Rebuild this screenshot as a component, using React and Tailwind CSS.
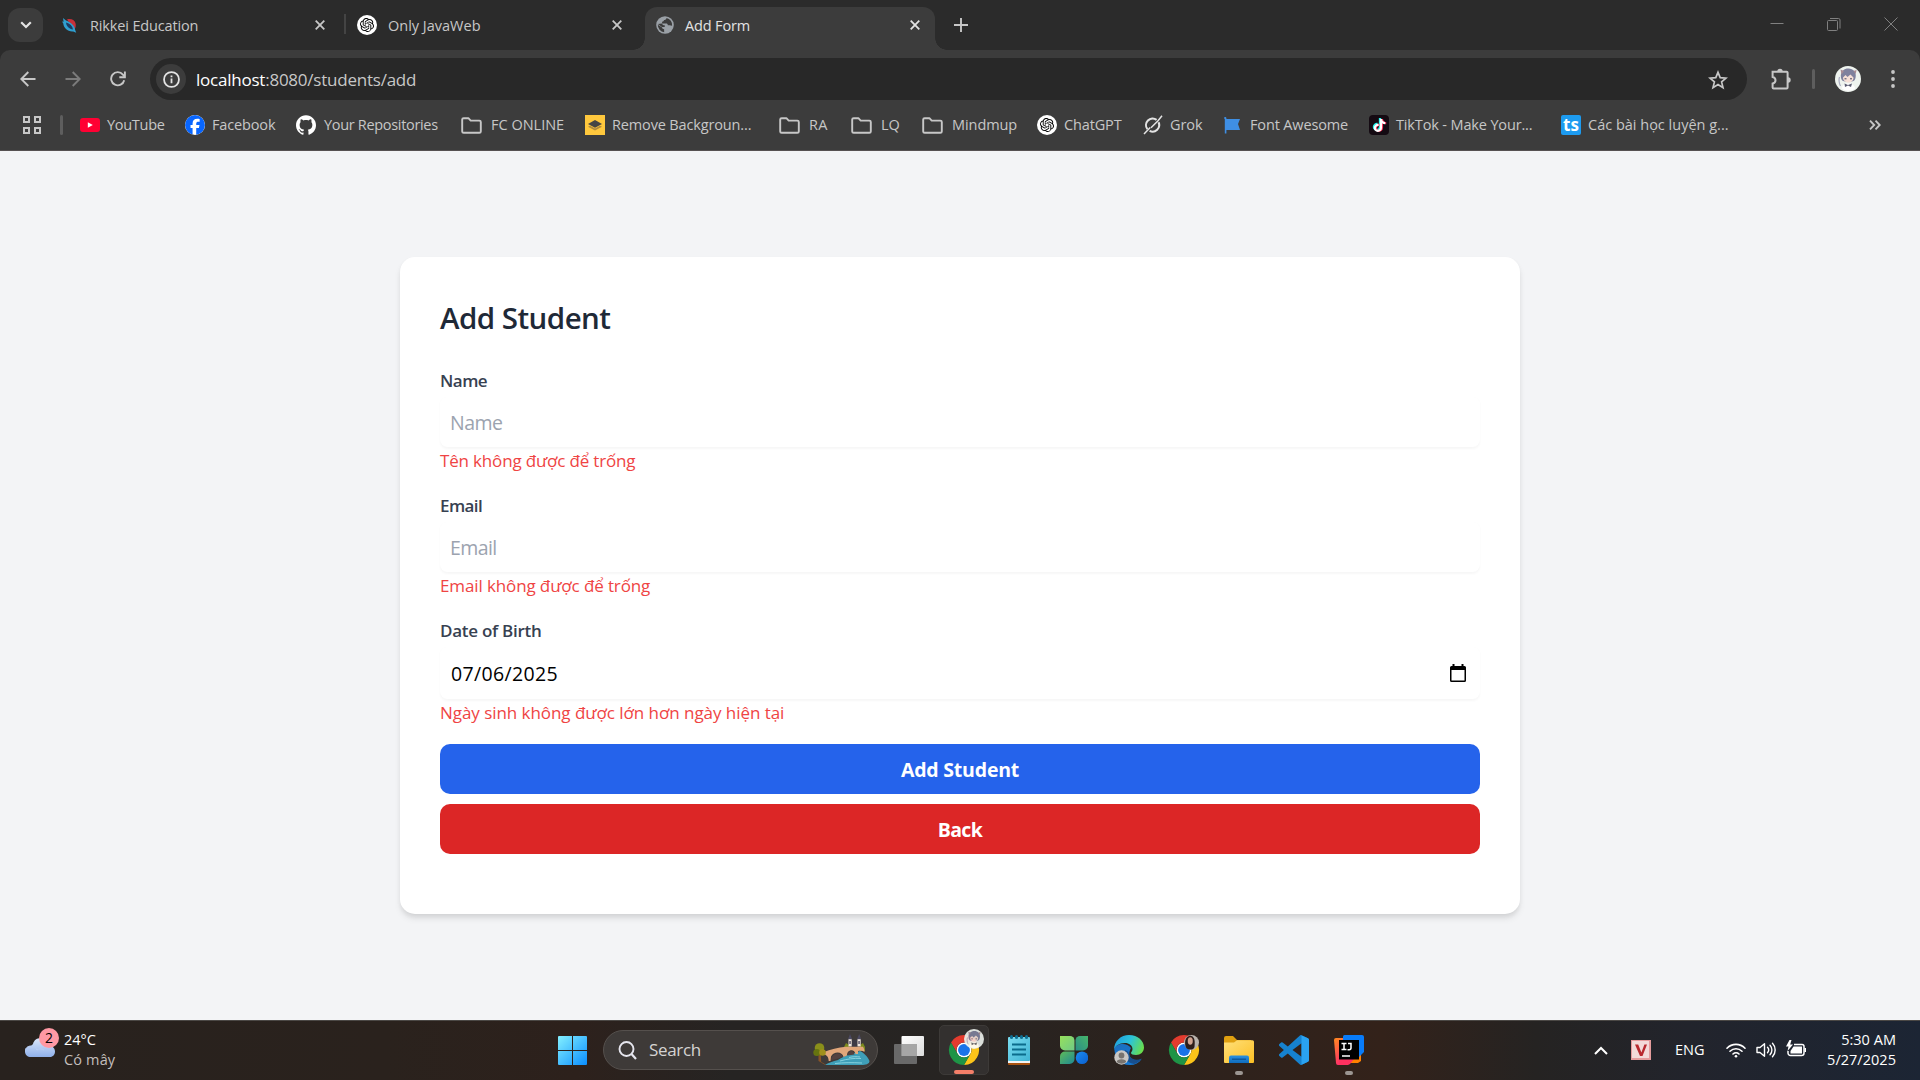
import React from "react";
import { FaFacebook, FaTiktok } from "react-icons/fa6";
import { SiOpenai, SiGithub } from "react-icons/si";

/* ---------- Browser icons ---------- */

const CloseX = ({ className = "" }) => (
  <svg viewBox="0 0 10 10" className={`size-[10px] shrink-0 ${className}`} fill="none" stroke="currentColor" strokeWidth="1.8">
    <path d="M.7.7l8.6 8.6M9.3.7L.7 9.3" />
  </svg>
);

const RikkeiIcon = () => (
  <svg viewBox="0 0 15 15" className="size-[15px] shrink-0">
    <path d="M5 1.500C9 .3 13 2 13.700 6c.4 3-.8 5.500-2.400 7L9.500 8z" fill="#c9303a" />
    <path d="M1 0l3 2.500C9 4 13 8.500 13.200 12l1 2.800-3-1.400C6 14 1.500 10 1.300 5.500L0 3.500l1.600.2z" fill="#2f9fd0" />
    <path d="M4 4.500c4 1 6.500 3.500 7 7-4-.5-6.500-3-7-7z" fill="#1b3b63" />
  </svg>
);

const OpenAiBadge = () => (
  <span className="flex size-5 shrink-0 items-center justify-center rounded-full bg-white text-black">
    <SiOpenai className="size-[14px]" />
  </span>
);

const GlobeIcon = () => (
  <svg viewBox="0 0 18 18" className="size-[18px] shrink-0">
    <circle cx="9" cy="9" r="8.800" fill="#9aa0a6" />
    <path d="M10.500 1.900c-.2 1.500-1.100 2-2.500 2.200-.2 1.200-.7 1.700-1.900 1.700v1.700h4c1.200 0 1.700.6 1.700 1.800h2c.6 0 1.200.3 2.300.5a7.300 7.300 0 0 0-5.600-7.900z" fill="#3c3c3c" />
    <path d="M1.800 8.800l4.300 2.800c.2 1.200.8 1.700 2 1.700l.1 2.900A7.300 7.300 0 0 1 1.800 8.800zM1.900 8.100L6 11h2.700V9.200c-1.500 0-2.400-.5-2.600-1.800z" fill="#3c3c3c" />
  </svg>
);

const FolderIcon = () => (
  <svg viewBox="0 0 21 17" className="h-[17px] w-[21px] shrink-0" fill="none" stroke="#c7c7c7" strokeWidth="1.9" strokeLinejoin="round">
    <path d="M1.200 2.600c0-.8.6-1.400 1.400-1.400h4.800l2.300 2.400h8.700c.8 0 1.400.6 1.400 1.400v9.400c0 .8-.6 1.400-1.400 1.400H2.600c-.8 0-1.400-.6-1.400-1.400z" />
  </svg>
);

const YouTubeIcon = () => (
  <svg viewBox="0 0 20 14" className="h-[14px] w-5 shrink-0">
    <rect width="20" height="14" rx="3" fill="#ff0033" />
    <path d="M7.800 4.200v5.600l5-2.800z" fill="#fff" />
  </svg>
);

const RemoveBgIcon = () => (
  <svg viewBox="0 0 20 20" className="size-5 shrink-0">
    <rect width="20" height="20" fill="#ffc83d" />
    <path d="M3 11.800L10 15.500l7-3.700-2-1.100-5 2.700-5-2.700z" fill="#b08a3e" />
    <path d="M10 5l7 3.900-7 3.900-7-3.900z" fill="#454545" />
  </svg>
);

const GrokIcon = () => (
  <svg viewBox="0 0 20 20" className="size-5 shrink-0" fill="none" stroke="#e3e3e3" strokeWidth="2.100">
    <path d="M15.600 7.300a6.600 6.600 0 0 1-9 8.600M4.400 14.200A6.600 6.600 0 0 1 13.600 4.900" />
    <path d="M19 .8L14.800 6 8 12.800M7.200 12.600L1 19" strokeWidth="1.500" />
  </svg>
);

const FontAwesomeIcon = () => (
  <svg viewBox="0 0 17 17" className="h-[17px] w-[17px] shrink-0">
    <path d="M0 1.200A1.200 1.200 0 0 1 2.400 1.200V2H16l-2 5 2 6H2.400v3.500H.8V2z" fill="#3f8fe4" />
  </svg>
);

const TikTokIcon = () => (
  <span className="relative flex size-5 shrink-0 items-center justify-center rounded-[4px] bg-[#140a12]">
    <FaTiktok className="absolute left-[3px] top-[3px] size-[13px] text-[#25f4ee]" />
    <FaTiktok className="absolute left-[5px] top-[4px] size-[13px] text-[#fe2c55]" />
    <FaTiktok className="absolute left-[4px] top-[3.500px] size-[13px] text-white" />
  </span>
);

const TsIcon = () => (
  <span className="flex size-5 shrink-0 items-center justify-center rounded-[2px] bg-[#1d9bf0] text-[17px] font-bold leading-none text-white">
    <span className="-mt-[2px]">ts</span>
  </span>
);

const Avatar = ({ className = "" }) => (
  <svg viewBox="0 0 26 26" className={className}>
    <circle cx="13" cy="13" r="13" fill="#eef3ee" />
    <path d="M6 12C5 5 9 2.500 13.500 2.500S22 6 20.500 12c-.5 2.500-2 3.500-4 3.500h-6C8 15.500 6.500 14.500 6 12z" fill="#7f819d" />
    <path d="M5.500 3.500l3.500 1.500-2.500 3.500z" fill="#a98b93" />
    <path d="M21.500 4l-3 1 2.200 3z" fill="#a98b93" />
    <path d="M8 11.500l2.500-2.500 2 2 3-2.500 3 3c0 3.500-2.500 5-5 5S8 15 8 11.500z" fill="#f6dfd6" />
    <path d="M9.500 12.800h2M15 12.800h2" stroke="#4b4a63" strokeWidth="1" />
    <path d="M7 22.500c0-3.500 3-5 6-5s7 1.500 7 5c-4 3-9 3-13 0z" fill="#fff" />
    <path d="M9.500 17.500l3.500 1.500 4-1.500-1 3.500-3-1.500-3 1.500z" fill="#5c5d72" />
    <path d="M4.500 11c-1 3-.5 6 1 9" stroke="#a9abc0" strokeWidth="1.200" fill="none" />
  </svg>
);

/* ---------- Browser chrome ---------- */

const TabStrip = () => (
  <div className="flex h-[50px] bg-[#2b2b2b] pl-2 text-[14.500px] tracking-[-0.010em] text-[#c7c7c7]">
    <div className="mt-2 flex h-[34px] w-[35px] shrink-0 items-center justify-center rounded-[12px] bg-[#3c3c3c]">
      <svg viewBox="0 0 12 8" className="h-[8px] w-[12px]" fill="none" stroke="#e3e3e3" strokeWidth="2.200">
        <path d="M1.200 1.200L6 6l4.800-4.800" />
      </svg>
    </div>
    <div className="flex h-[50px] w-[301px] items-center pl-[19px] pr-[19px]">
      <RikkeiIcon />
      <span className="ml-[13px] whitespace-nowrap pt-[2px] tracking-[-0.010em]">Rikkei Education</span>
      <CloseX className="ml-auto" />
    </div>
    <div className="mt-[14px] h-5 w-[2px] bg-[#444]" />
    <div className="flex h-[50px] w-[299px] items-center pl-[11px] pr-[23px]">
      <OpenAiBadge />
      <span className="ml-[11px] whitespace-nowrap pt-[2px] tracking-normal">Only JavaWeb</span>
      <CloseX className="ml-auto" />
    </div>
    <div className="relative mt-[7px] flex h-[43px] w-[290px] items-center rounded-t-[12px] bg-[#3c3c3c] pb-[7px] pl-[11px] pr-[15px] text-[#e3e3e3]">
      <span className="absolute -left-[12px] bottom-0 size-[12px] bg-[radial-gradient(circle_at_0_0,transparent_11.500px,#3c3c3c_12px)]" />
      <span className="absolute -right-[12px] bottom-0 size-[12px] bg-[radial-gradient(circle_at_100%_0,transparent_11.500px,#3c3c3c_12px)]" />
      <GlobeIcon />
      <span className="ml-[11px] whitespace-nowrap pt-[2px]">Add Form</span>
      <CloseX className="ml-auto" />
    </div>
    <svg viewBox="0 0 14 14" className="ml-[19px] mt-[18px] size-[14px]" stroke="#c7c7c7" strokeWidth="1.900">
      <path d="M7 0v14M0 7h14" />
    </svg>
    <div className="ml-auto mr-[22px] mt-[17px] flex gap-[43px] text-[#808080]">
      <svg viewBox="0 0 14 14" className="size-[14px]" stroke="currentColor"><path d="M.5 6.500h13" /></svg>
      <svg viewBox="0 0 14 14" className="size-[14px]" stroke="currentColor" fill="none">
        <rect x=".5" y="3.500" width="10" height="10" rx="1" />
        <path d="M3 1.500h8.500a1.500 1.500 0 0 1 1.500 1.500V11.500" />
      </svg>
      <svg viewBox="0 0 14 14" className="size-[14px]" stroke="currentColor"><path d="M.5 1.500l13 13M13.500 1.500L.5 14.500" transform="translate(0 -1)" /></svg>
    </div>
  </div>
);

const Toolbar = () => (
  <div className="flex h-[57px] items-center pt-[1px]">
    <div className="flex w-[150px] shrink-0 items-center pl-[19.500px]">
      <svg viewBox="0 0 16 16" className="size-4" fill="none" stroke="#c7c7c7" strokeWidth="1.900"><path d="M8.300 1L1.300 8l7 7M1.500 8H15.500" /></svg>
      <svg viewBox="0 0 16 16" className="ml-[29px] size-4" fill="none" stroke="#7b7b7b" strokeWidth="1.900"><path d="M7.700 1l7 7-7 7M14.500 8H.5" /></svg>
      <svg viewBox="0 0 16 16" className="ml-[29px] size-4" fill="none" stroke="#c7c7c7" strokeWidth="1.900">
        <path d="M14.200 9.200A6.600 6.600 0 1 1 12.900 3.600L14.500 5.500" />
        <path d="M14.900 .6v5.600H9.300" />
      </svg>
    </div>
    <div className="flex h-[42px] w-[1597px] shrink-0 items-center rounded-full bg-[#282828] pl-[6px]">
      <span className="flex size-[30px] items-center justify-center rounded-full bg-[#3c3c3c]">
        <svg viewBox="0 0 18 18" className="size-[17px]" fill="none" stroke="#e3e3e3" strokeWidth="1.900">
          <circle cx="9" cy="9" r="7.900" />
          <path d="M9 8v5M9 4.800v1.900" />
        </svg>
      </span>
      <span className="ml-[10px] whitespace-nowrap pt-[2px] text-[17px] tracking-[-0.230px] text-[#c7c7c7]">
        <span className="text-white">localhost</span>:8080/students/add
      </span>
      <svg viewBox="0 0 20 20" className="ml-auto mr-[19px] mt-[1px] size-[20px]" fill="none" stroke="#c7c7c7" strokeWidth="1.700">
        <path d="M10 2.300l2.200 5.300 5.800.5-4.400 3.800 1.400 5.700-5-3.100-5 3.100 1.400-5.700L2 8.100l5.800-.5z" />
      </svg>
    </div>
    <svg viewBox="0 0 22 22" className="ml-[23px] size-[22px]">
      <path d="M2.600 3.700h14a1 1 0 0 1 1 1v14.700a1 1 0 0 1-1 1h-13a1 1 0 0 1-1-1V15.500c1.700-.3 2.900-1.400 2.900-3.200S4.300 9.300 2.600 9z" fill="none" stroke="#c7c7c7" strokeWidth="2" />
      <path d="M7.300 3.500a2.700 2.700 0 0 1 5.400 0zM18 9.300a2.700 2.700 0 0 1 0 5.400z" fill="#c7c7c7" />
    </svg>
    <div className="ml-[20px] h-5 w-[3px] rounded bg-[#5e5e5e]" />
    <Avatar className="ml-[19.500px] size-[26px]" />
    <svg viewBox="0 0 4 18" className="ml-[30px] h-[18px] w-1" fill="#c7c7c7">
      <circle cx="2" cy="2" r="1.900" /><circle cx="2" cy="9" r="1.900" /><circle cx="2" cy="16" r="1.900" />
    </svg>
  </div>
);

const BOOKMARKS = [
  { label: "YouTube", icon: <YouTubeIcon />, box: "w-[105px] gap-[7px]", text: "tracking-[-0.020em]" },
  { label: "Facebook", icon: <FaFacebook className="size-5 shrink-0 rounded-full bg-white text-[#0866ff]" />, box: "w-[111px] gap-[7px]", text: "tracking-[-0.010em]" },
  { label: "Your Repositories", icon: <SiGithub className="size-5 shrink-0 text-white" />, box: "w-[165px] gap-[8px]", text: "tracking-[-0.022em]" },
  { label: "FC ONLINE", icon: <FolderIcon />, box: "w-[124px] gap-[9px]", text: "tracking-normal" },
  { label: "Remove Backgroun...", icon: <RemoveBgIcon />, box: "w-[194px] gap-[7px]", text: "tracking-[-0.010em]" },
  { label: "RA", icon: <FolderIcon />, box: "w-[72px] gap-[9px]", text: "tracking-[0.020em]" },
  { label: "LQ", icon: <FolderIcon />, box: "w-[71px] gap-[9px]", text: "tracking-normal" },
  { label: "Mindmup", icon: <FolderIcon />, box: "w-[115px] gap-[9px]", text: "tracking-[-0.005em]" },
  { label: "ChatGPT", icon: <OpenAiBadge />, box: "w-[106px] gap-[7px]", text: "tracking-[-0.010em]" },
  { label: "Grok", icon: <GrokIcon />, box: "w-[81px] gap-[7px]", text: "tracking-[-0.005em]" },
  { label: "Font Awesome", icon: <FontAwesomeIcon />, box: "w-[145px] gap-[9px]", text: "tracking-[-0.010em]" },
  { label: "TikTok - Make Your...", icon: <TikTokIcon />, box: "w-[192px] gap-[7px]", text: "tracking-[-0.010em]" },
  { label: "Các bài học luyện g...", icon: <TsIcon />, box: "w-[180px] gap-[7px]", text: "tracking-normal" },
];

const BookmarksBar = () => (
  <div className="flex h-[43px] items-center pb-[7px] pl-[23px] text-[14.500px] text-[#c7c7c7]">
    <svg viewBox="0 0 18 18" className="size-[18px] shrink-0" fill="none" stroke="#c7c7c7" strokeWidth="2">
      <path d="M1 1h5v5H1zM12 1h5v5h-5zM1 12h5v5H1zM12 12h5v5h-5z" />
    </svg>
    <div className="ml-[19px] h-5 w-[3px] shrink-0 rounded bg-[#5e5e5e]" />
    <div className="ml-[17px] flex">
      {BOOKMARKS.map((b) => (
        <div key={b.label} className={`flex shrink-0 items-center ${b.box}`}>
          {b.icon}
          <span className={`whitespace-nowrap ${b.text}`}>{b.label}</span>
        </div>
      ))}
    </div>
    <svg viewBox="0 0 12 10" className="ml-auto mr-[39px] h-[10px] w-[12px]" fill="none" stroke="#c7c7c7" strokeWidth="1.900">
      <path d="M1 .7L5.200 5 1 9.300M6.500 .7L10.700 5l-4.200 4.300" />
    </svg>
  </div>
);

/* ---------- Page ---------- */

const Field = ({ label, error, labelClass, errorClass, children }) => (
  <div className="mb-5">
    <div className={`mb-[5px] h-[25px] text-[17px] font-semibold leading-[27px] text-[#374151] ${labelClass}`}>{label}</div>
    {children}
    <div className={`h-[25px] text-[17px] leading-[27px] text-[#ef4444] ${errorClass}`}>{error}</div>
  </div>
);

const inputBox = "flex items-center rounded-[7.500px] bg-white px-[10px] pt-[2px] text-[19.500px] shadow-[0_1.250px_2.500px_0_rgba(0,0,0,0.035)]";

const StudentForm = () => (
  <main className="flex h-[869px] items-center justify-center bg-[#f3f4f6]">
    <div className="h-[657px] w-[1120px] rounded-[15px] bg-white p-10 shadow-[0_5px_7.500px_-1.250px_rgba(0,0,0,0.1),0_2.500px_5px_-1.250px_rgba(0,0,0,0.06)]">
      <h2 className="mb-[30px] h-10 text-[29.500px] font-semibold leading-[41px] tracking-[-0.018em] text-[#1f2937]">Add Student</h2>
      <Field label="Name" labelClass="tracking-[-0.030em]" error="Tên không được để trống" errorClass="tracking-[-0.010em]">
        <div className={`${inputBox} h-[50px] tracking-[-0.025em] text-[#9ca3af]`}>Name</div>
      </Field>
      <Field label="Email" labelClass="tracking-[-0.035em]" error="Email không được để trống" errorClass="tracking-[-0.007em]">
        <div className={`${inputBox} h-[50px] tracking-[-0.030em] text-[#9ca3af]`}>Email</div>
      </Field>
      <Field label="Date of Birth" labelClass="tracking-[-0.016em]" error="Ngày sinh không được lớn hơn ngày hiện tại" errorClass="tracking-[-0.003em]">
        <div className={`${inputBox} h-[52px] justify-between tracking-[0.018em] text-black`}>
          <span className="pl-[1px]">07/06/2025</span>
          <svg viewBox="0 0 16 18" className="mb-[3px] mr-1 h-[18px] w-4">
            <path d="M2.500 0h2v2h7V0h2v2H14.500A1.500 1.500 0 0 1 16 3.500v13a1.500 1.500 0 0 1-1.500 1.500h-13A1.500 1.500 0 0 1 0 16.500v-13A1.500 1.500 0 0 1 1.500 2h1zM1.500 6v10.500h13V6z" fill="#000" fillRule="evenodd" />
          </svg>
        </div>
      </Field>
      <button className="flex h-[50px] w-full items-center justify-center rounded-[10px] bg-[#2563eb] pt-[2px] text-[19.500px] font-bold tracking-[-0.010em] text-white">Add Student</button>
      <button className="mt-[10px] flex h-[50px] w-full items-center justify-center rounded-[10px] bg-[#dc2626] pt-[2px] text-[19.500px] font-bold tracking-[-0.035em] text-white">Back</button>
    </div>
  </main>
);

/* ---------- Taskbar ---------- */

const Chrome = ({ children }) => (
  <svg viewBox="0 0 48 48" className="size-[30px] overflow-visible">
    <circle cx="24" cy="24" r="12" fill="#fff" />
    <path d="M24,12H44.7812a23.9939,23.9939,0,0,0-41.5639.0029L13.6079,30l.0093-.0024A11.9852,11.9852,0,0,1,24,12Z" fill="#e33b2e" />
    <circle cx="24" cy="24" r="9.500" fill="#1a73e8" />
    <path d="M34.3913,30.0029,24.0007,48A23.994,23.994,0,0,0,44.78,12.0031H23.9989l-.0025.0093A11.985,11.985,0,0,1,34.3913,30.0029Z" fill="#fcc419" />
    <path d="M13.6086,30.0031,3.218,12.006A23.994,23.994,0,0,0,24.0025,48L34.3931,30.0029l-.0067-.0068a11.9852,11.9852,0,0,1-20.7778.007Z" fill="#1e9446" />
    {children}
  </svg>
);

const Cloud = () => (
  <span className="relative block h-[30px] w-[34px]">
    <svg viewBox="0 0 30 20" className="absolute left-0 top-[10px] h-[20px] w-[30px]">
      <defs>
        <linearGradient id="cloud" x1="0" y1="0" x2="0" y2="1">
          <stop offset="0" stopColor="#dbe8fb" /><stop offset="1" stopColor="#8fb0ea" />
        </linearGradient>
      </defs>
      <path d="M8 6C9 2 12 0 16 0c5 0 8 3.500 8.500 8C28 8 30 10.500 30 13.500S28 19 25 19H6c-3.500 0-6-2-6-5.500S3 8 6 8z" fill="url(#cloud)" />
      <path d="M0 13.500C0 10 3 8 6 8c3 0 5 1.500 6 4 1.500-1.500 5-1.500 7 0" fill="none" stroke="#b9cff5" />
    </svg>
    <span className="absolute left-[14px] top-0 flex size-5 items-center justify-center rounded-full bg-[#ff99a4] text-[14px] text-black">2</span>
  </span>
);

const StartLogo = () => (
  <svg viewBox="0 0 29 29" className="size-[29px]">
    <defs>
      <linearGradient id="start" gradientUnits="userSpaceOnUse" x1="0" y1="0" x2="29" y2="29">
        <stop offset="0" stopColor="#84f0ff" /><stop offset="1" stopColor="#0a8eff" />
      </linearGradient>
    </defs>
    <path d="M0 1a1 1 0 0 1 1-1h13v14H0zM15 0h13a1 1 0 0 1 1 1v13H15zM0 15h14v14H1a1 1 0 0 1-1-1zM15 15h14v13a1 1 0 0 1-1 1H15z" fill="url(#start)" />
  </svg>
);

const BridgeArt = () => (
  <svg viewBox="0 0 57 32" className="h-8 w-[57px] shrink-0">
    <path d="M12 31c3-2 8-4 13-5 4-3 9-5 13-6l9-3c4 2 8 6 9.500 10 0 3-4 4-8 4z" fill="#3f9fb8" />
    <path d="M27 27c7-2 14-3 21-2.500M22 29.500c9-1 17-1 27-.5M36 23.500c4-1 8-1 11-.5" stroke="#8fd7e2" strokeWidth=".9" fill="none" />
    <path d="M31 13l2-4 3 2v4h-5zM47 11l3-2 2 4v4h-5z" fill="#7d8b1d" />
    <path d="M39 6h5v7h-5z" fill="#3d3a45" />
    <path d="M35.500 5h3.200v7.500h-3.200zM44.500 5h3.200v7.500h-3.200z" fill="#efe6df" />
    <path d="M36.300 7h1.500v3h-1.500zM45.300 7h1.500v3h-1.500z" fill="#5c566a" />
    <path d="M35 5.200L37 0l2.200 5.200zM44 5.200L46.200 0l2 5.200z" fill="#4b4960" />
    <path d="M11 18c6-2.500 14-4.500 22-5.200h17c1 1.500 1.500 3.500 1.500 5.200-1.500-1.200-4-1.500-6.500-1v3h-2.500c-.5-3-3-4.500-5.500-3.500-2 .8-3 2.500-3 5l-3.500 1.500c-1-6-10-6-12.500-.5L17.500 27h-1.800c0-3-1.200-5.200-3.700-6.500z" fill="#e2a77a" />
    <path d="M18 26.500c.5-8 10-9 12-3.500-4 1.300-8 2.300-12 3.500zM34.500 21.500c.2-5.500 6.300-6 7-1z" fill="#54413f" />
    <path d="M5.500 19h2.200l.5 9c2 1 4 2 4.500 3.200L5.500 27z" fill="#8a5426" />
    <circle cx="6.500" cy="14" r="4.800" fill="#8a8f1a" /><circle cx="3.800" cy="18.500" r="3.500" fill="#66740f" /><circle cx="9.500" cy="18.500" r="3.300" fill="#a0901c" />
  </svg>
);

const TaskView = () => (
  <svg viewBox="0 0 30 28" className="h-7 w-[30px]">
    <defs>
      <linearGradient id="tv" x1="0" y1="0" x2="1" y2="1"><stop offset="0" stopColor="#fff" /><stop offset="1" stopColor="#dcdcdc" /></linearGradient>
    </defs>
    <rect x="7.500" y="0" width="22.500" height="20" rx="1" fill="url(#tv)" />
    <rect x="0" y="8" width="23" height="20" rx="1" fill="#757575" fillOpacity=".85" />
    <rect x="7.500" y="8" width="15.500" height="12" fill="#a6a6a6" />
  </svg>
);

const Notepad = () => (
  <svg viewBox="0 0 22 30" className="h-[30px] w-[22px]">
    <defs>
      <linearGradient id="np" x1="0" y1="0" x2="1" y2="1"><stop offset="0" stopColor="#7adcf0" /><stop offset="1" stopColor="#3fb4d4" /></linearGradient>
    </defs>
    <rect x="0" y="24" width="22" height="6" rx="1" fill="#a8520f" />
    <rect x="0" y="22" width="22" height="6" fill="#f3f3f3" />
    <rect x="0" y="2" width="22" height="24" rx="1" fill="url(#np)" />
    <path d="M4 9.500h14M4 14.500h14M4 19.500h14" stroke="#0b6c8c" strokeWidth="1.800" />
    <g fill="#0f6f93"><rect x="2" y="0" width="3" height="4" rx="1.500" /><rect x="7" y="0" width="3" height="4" rx="1.500" /><rect x="12" y="0" width="3" height="4" rx="1.500" /><rect x="17" y="0" width="3" height="4" rx="1.500" /></g>
  </svg>
);

const Clover = () => (
  <svg viewBox="0 0 28 28" className="size-7">
    <defs>
      <linearGradient id="cl1" x1="0" y1="0" x2="1" y2="1"><stop offset="0" stopColor="#97e05c" /><stop offset="1" stopColor="#6fca86" /></linearGradient>
      <linearGradient id="cl2" x1="1" y1="0" x2="0" y2="1"><stop offset="0" stopColor="#46b56a" /><stop offset="1" stopColor="#2b8f87" /></linearGradient>
      <linearGradient id="cl3" x1="0" y1="0" x2="1" y2="1"><stop offset="0" stopColor="#5fbb58" /><stop offset="1" stopColor="#1f8a94" /></linearGradient>
      <linearGradient id="cl4" x1="0" y1="0" x2="1" y2="1"><stop offset="0" stopColor="#1a8cf0" /><stop offset="1" stopColor="#0b5fd0" /></linearGradient>
    </defs>
    <path d="M0 0h10a4.500 4.500 0 0 1 4.500 4.500v10H5A5 5 0 0 1 0 9.500z" fill="url(#cl1)" />
    <path d="M28 0v9.500a5 5 0 0 1-5 5h-7.500v-10A4.500 4.500 0 0 1 20 0z" fill="url(#cl2)" />
    <path d="M0 28v-7.500a5 5 0 0 1 5-5h9.500V23a5 5 0 0 1-5 5z" fill="url(#cl3)" />
    <circle cx="22" cy="21.700" r="6.300" fill="url(#cl4)" />
  </svg>
);

const Edge = () => (
  <svg viewBox="0 0 30 30" className="size-[30px]">
    <defs>
      <linearGradient id="eg1" x1="0" y1=".3" x2="1" y2=".6"><stop offset="0" stopColor="#1f9fe0" /><stop offset=".5" stopColor="#2cc3d8" /><stop offset="1" stopColor="#6ade4a" /></linearGradient>
      <linearGradient id="eg2" x1="0" y1="0" x2="0" y2="1"><stop offset="0" stopColor="#1b6fc0" /><stop offset="1" stopColor="#1478d4" /></linearGradient>
    </defs>
    <path d="M.3 14C1 22 5 30 16 30c5 0 9-2 11.500-6-4 2-9 1.500-11-1.500C14 19 16 15 17 13 13 7 2 8 .3 14z" fill="url(#eg2)" />
    <path d="M11 15c-2 6 1 13 9 14 3-.8 6-2.500 7.700-5.500C20 27 14 22 14.500 17z" fill="#174f8f" />
    <path d="M0 15C0 6 7 0 15 0c9 0 15 6 15 12.500 0 4.500-3.500 7.500-8 7.500-3 0-5-1-5-2s1.500-1.500 1.500-4C18.500 10.500 15 8 11 8 5 8 1 11 0 15z" fill="url(#eg1)" />
    <circle cx="7.500" cy="22.500" r="7.200" fill="#c9c7c4" />
    <circle cx="7.500" cy="20.500" r="2.900" fill="#77736f" />
    <path d="M2.800 27c0-2 2-2.800 4.700-2.800s4.700.8 4.700 2.800a7 7 0 0 1-9.400 0z" fill="#77736f" />
  </svg>
);

const Explorer = () => (
  <svg viewBox="0 0 30 28" className="h-7 w-[30px]">
    <defs>
      <linearGradient id="ex" x1="0" y1="0" x2="1" y2="1"><stop offset="0" stopColor="#ffe07a" /><stop offset="1" stopColor="#fcbf24" /></linearGradient>
      <linearGradient id="ex2" x1="0" y1="0" x2="0" y2="1"><stop offset="0" stopColor="#2a90e0" /><stop offset="1" stopColor="#0f6cbd" /></linearGradient>
    </defs>
    <path d="M0 2a2 2 0 0 1 2-2h7l4 4h14v6H0z" fill="#e0a010" />
    <path d="M0 6.500h10l3-2.300h15.500A1.500 1.500 0 0 1 30 5.700V26a1 1 0 0 1-1 1H1a1 1 0 0 1-1-1z" fill="url(#ex)" />
    <path d="M5 27v-5.500a2 2 0 0 1 2-2h16a2 2 0 0 1 2 2V27z" fill="url(#ex2)" />
    <path d="M8 23.200h14" stroke="#0a4f92" strokeWidth="1.200" />
  </svg>
);

const VsCode = () => (
  <svg viewBox="0 0 24 24" className="size-[30px]">
    <path d="M23.150 2.587L18.210.210a1.494 1.494 0 0 0-1.705.290l-9.460 8.630-4.120-3.128a.999.999 0 0 0-1.276.057L.327 7.261A1 1 0 0 0 .326 8.740L3.899 12 .326 15.260a1 1 0 0 0 .001 1.479L1.650 17.940a.999.999 0 0 0 1.276.057l4.120-3.128 9.460 8.630a1.492 1.492 0 0 0 1.704.290l4.942-2.377A1.500 1.500 0 0 0 24 20.060V3.939a1.500 1.500 0 0 0-.850-1.352zm-5.146 14.861L10.826 12l7.178-5.448v10.896z" fill="#1682cf" />
    <path d="M18.004.300L23.150 2.587A1.500 1.500 0 0 1 24 3.939V20.060a1.500 1.500 0 0 1-.850 1.352L18.004 23.800z" fill="#2aa3f2" />
  </svg>
);

const IntelliJ = () => (
  <svg viewBox="0 0 30 30" className="size-[30px]">
    <defs>
      <linearGradient id="ij" x1="0" y1="0" x2=".4" y2="1"><stop offset="0" stopColor="#ff8a1f" /><stop offset="1" stopColor="#ff2d6b" /></linearGradient>
    </defs>
    <path d="M17 18h10v8l-3 2h-8z" fill="#ff8100" />
    <path d="M0 5a2 2 0 0 1 2-2h12v22l-4 5H4a2 2 0 0 1-2-2z" fill="url(#ij)" />
    <path d="M5 24h15l-4 5-2 1H5z" fill="#ff3160" />
    <path d="M9 1.500A1.500 1.500 0 0 1 10.500 0H28a2 2 0 0 1 2 2v15l-5 5H9z" fill="#087cfa" />
    <rect x="5" y="5" width="20" height="19.500" fill="#000" />
    <path d="M7.500 8.500h5M10 8.500v6M7.500 14.500h5M14 8.500h3v4.500q0 1.700-1.800 1.700h-1.700M8 21h8" stroke="#fff" strokeWidth="1.500" fill="none" />
  </svg>
);

const APPS = [
  { id: "taskview", icon: <TaskView /> },
  {
    id: "chrome-main",
    active: true,
    icon: (
      <span className="relative block size-[30px]">
        <Chrome />
        <Avatar className="absolute -top-[6px] left-[15px] size-5 opacity-90" />
      </span>
    ),
  },
  { id: "notepad", icon: <Notepad /> },
  { id: "clover", icon: <Clover /> },
  { id: "edge", icon: <Edge /> },
  {
    id: "chrome-second",
    icon: (
      <Chrome>
        <circle cx="36" cy="12" r="12" fill="#b9b3ad" />
        <path d="M28 21c-4-6-3-20 6-20 6 0 8 7 7 15 0 4-1 6-4 7-4 1-7 0-9-2z" fill="#2c1d1a" />
        <ellipse cx="34" cy="9.500" rx="4" ry="6" fill="#d0a390" />
      </Chrome>
    ),
  },
  { id: "explorer", icon: <Explorer />, running: true },
  { id: "vscode", icon: <VsCode /> },
  { id: "intellij", icon: <IntelliJ />, running: true },
];

const Taskbar = () => (
  <footer className="flex h-[60px] items-center border-t border-[#4b4845] bg-[linear-gradient(90deg,#28221e_0%,#2a221d_20%,#2d211c_30%,#262423_38%,#272422_50%,#2c221d_60%,#33221a_72%,#252322_80%,#22242c_88%,#1c2534_100%)] text-white">
    <div className="flex w-[558px] items-center pl-[25px] text-[14.500px] leading-5">
      <div className="-mt-4"><Cloud /></div>
      <div className="-mt-[2px] ml-[5px]">
        <div className="tracking-normal">24°C</div>
        <div className="tracking-[0.010em] text-[#c3bfbc]">Có mây</div>
      </div>
    </div>
    <StartLogo />
    <div className="-mt-[1px] ml-4 flex h-10 w-[275px] items-center rounded-full border border-[#55504d] bg-[#3e3a38] pl-[14px] pr-[7px] text-[17px] tracking-[-0.020em] text-[#d5d3d2]">
      <svg viewBox="0 0 19 19" className="size-[19px]" fill="none" stroke="#e6e6ee" strokeWidth="1.900">
        <circle cx="8.500" cy="8" r="7" /><path d="M13.500 13l4.500 5" strokeWidth="2.200" />
      </svg>
      <span className="ml-[12px] grow">Search</span>
      <BridgeArt />
    </div>
    <div className="-mt-[1px] ml-[6px] flex gap-[5px]">
      {APPS.map((a) => (
        <div
          key={a.id}
          className={`relative flex size-[50px] items-center justify-center rounded-[5px] ${a.active ? "border border-[#3d3a38] bg-[#33302f]" : ""}`}
        >
          {a.icon}
          {a.active && <span className="absolute bottom-0 left-[14px] h-1 w-5 rounded-full bg-[#f37f69]" />}
          {a.running && <span className="absolute bottom-0 left-[21px] h-1 w-2 rounded-full bg-[#9c9692]" />}
        </div>
      ))}
    </div>
    <div className="-mt-[1px] ml-auto flex items-center pr-6 text-[14.500px]">
      <svg viewBox="0 0 14 9" className="h-[9px] w-[14px]" fill="none" stroke="#fff" strokeWidth="2"><path d="M1 8l6-6 6 6" /></svg>
      <svg viewBox="0 0 20 20" className="ml-[23px] size-5">
        <rect width="20" height="20" fill="#e59c9c" /><rect x="1" y="1" width="17" height="17" fill="#f3dad8" />
        <path d="M4 4.500h3.200l3.200 8 3-8H16l-4.500 11.500H9z" fill="#b8292e" />
      </svg>
      <span className="ml-6 w-[51px] tracking-[-0.005em]">ENG</span>
      <svg viewBox="0 0 20 16" className="h-4 w-5" fill="none" stroke="#fff" strokeWidth="1.600" strokeLinecap="round">
        <path d="M1 6.200a12.500 12.500 0 0 1 18 0M4 9.200a8.500 8.500 0 0 1 12 0M7 12a4.400 4.400 0 0 1 6 0" />
        <circle cx="10" cy="14.200" r="1.300" fill="#fff" stroke="none" />
      </svg>
      <svg viewBox="0 0 20 16" className="ml-[10px] h-4 w-5" fill="none" stroke="#fff" strokeWidth="1.400" strokeLinecap="round" strokeLinejoin="round">
        <path d="M1 5.500h3L8.500 1.700v12.600L4 10.500H1zM11.500 5.300a4 4 0 0 1 0 5.400M14 3.200a7 7 0 0 1 0 9.600M16.500 1.200a10 10 0 0 1 0 13.600" />
      </svg>
      <svg viewBox="0 0 20 17" className="-mt-[3px] ml-[10px] h-[17px] w-5">
        <path d="M8 4.500h8a2 2 0 0 1 2 2V13a2.500 2.500 0 0 1-2.500 2.500h-11A2.500 2.500 0 0 1 2 13v-2" fill="none" stroke="#fff" strokeWidth="1.500" />
        <path d="M7.500 6.500H16v7H4.500V11z" fill="#fff" />
        <path d="M18.500 8H20v4h-1.500z" fill="#fff" />
        <path d="M3.500 0L0 6.500h2.500L1.500 11 7 4.500H4.200L5.500 0z" fill="#fff" />
      </svg>
      <div className="-mt-[1px] ml-[21px] text-right leading-5 tracking-[0.002em]">
        <div>5:30 AM</div>
        <div>5/27/2025</div>
      </div>
    </div>
  </footer>
);

export default function App() {
  return (
    <div className="h-[1080px] w-[1920px] overflow-hidden bg-[#2b2b2b] font-['Open_Sans','Noto_Sans',sans-serif]">
      <TabStrip />
      <header className="h-[101px] rounded-t-[10px] border-b border-[#565152] bg-[#3c3c3c]">
        <Toolbar />
        <BookmarksBar />
      </header>
      <StudentForm />
      <Taskbar />
    </div>
  );
}
